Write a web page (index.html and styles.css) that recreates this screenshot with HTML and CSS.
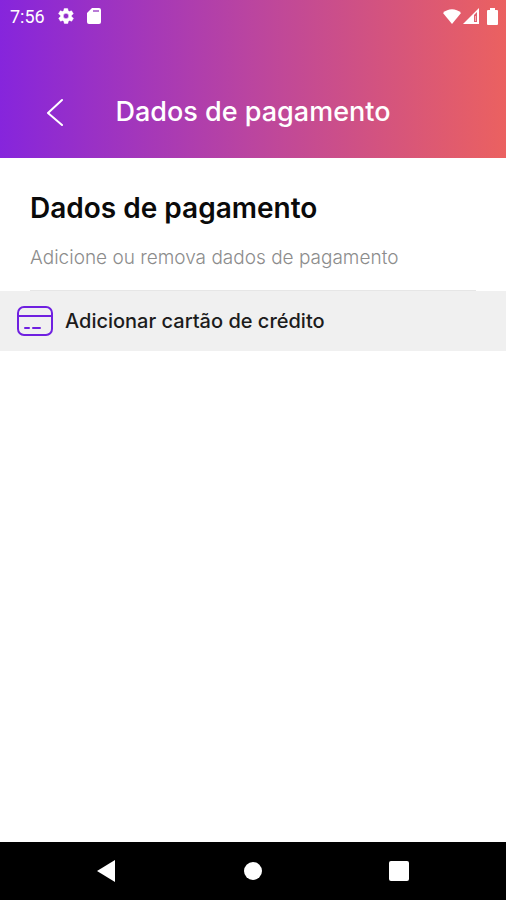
FILE: index.html
```
<!DOCTYPE html>
<html lang="pt-BR">

<head>
    <meta charset="UTF-8">
    <meta name="viewport" content="width=device-width, initial-scale=1.0">
    <title>Dados de pagamento</title>
    <link rel="stylesheet" href="styles.css">
</head>

<body>
    <header class="header">
        <div class="status-bar">
            <span class="clock">7:56</span>
            <div class="status-left">
                <svg width="18" height="18" viewBox="0 0 24 24" fill="#fff" aria-hidden="true">
                    <path d="M19.4 13a7.5 7.5 0 0 0 0-2l2.1-1.6a.5.5 0 0 0 .1-.7l-2-3.4a.5.5 0 0 0-.6-.2l-2.5 1a7.3 7.3 0 0 0-1.7-1l-.4-2.7a.5.5 0 0 0-.5-.4h-4a.5.5 0 0 0-.5.4l-.4 2.7a7.3 7.3 0 0 0-1.7 1l-2.5-1a.5.5 0 0 0-.6.2l-2 3.4a.5.5 0 0 0 .1.7L4.6 11a7.5 7.5 0 0 0 0 2l-2.1 1.6a.5.5 0 0 0-.1.7l2 3.4c.1.2.4.3.6.2l2.5-1a7.3 7.3 0 0 0 1.7 1l.4 2.7c0 .2.2.4.5.4h4c.3 0 .5-.2.5-.4l.4-2.7a7.3 7.3 0 0 0 1.7-1l2.5 1c.2.1.5 0 .6-.2l2-3.4a.5.5 0 0 0-.1-.7zM12 15.6a3.6 3.6 0 1 1 0-7.2 3.6 3.6 0 0 1 0 7.2z" stroke="#fff" stroke-width=".6" />
                </svg>
                <svg width="14" height="16" viewBox="0 0 14 16" aria-hidden="true">
                    <path d="M5 0h7a2 2 0 0 1 2 2v12a2 2 0 0 1-2 2H2a2 2 0 0 1-2-2V5z" fill="#fff" />
                    <path d="M6 3h6" stroke="#b87bd6" stroke-width="2" />
                </svg>
            </div>
            <div class="status-right">
                <svg width="18" height="15" viewBox="0 0 18 15" fill="#fff" aria-hidden="true">
                    <path d="M0 4C5-1 13-1 18 4L9 15z" />
                </svg>
                <svg width="16" height="16" viewBox="0 0 16 16" aria-hidden="true">
                    <path d="M16 0v16H0z" fill="#fff" />
                    <path d="M14 4v10h-3V7z" fill="#e0606f" />
                    <path d="M12.5 8v5" stroke="#f5b8b8" />
                </svg>
                <svg class="battery" width="11" height="17" viewBox="0 0 11 17" fill="#fff" aria-hidden="true">
                    <path d="M3 0h5v2h2a1 1 0 0 1 1 1v13a1 1 0 0 1-1 1H1a1 1 0 0 1-1-1V3a1 1 0 0 1 1-1h2z" />
                </svg>
            </div>
        </div>
        <div class="toolbar">
            <button class="back-button" type="button" aria-label="Voltar">
                <svg width="18" height="28" viewBox="0 0 18 28" fill="none" stroke="#fff" stroke-width="2" stroke-linecap="round" stroke-linejoin="round">
                    <path d="M16 2L2 15l14 12" />
                </svg>
            </button>
            <h1>Dados de pagamento</h1>
        </div>
    </header>

    <main class="content">
        <div class="intro">
            <h2>Dados de pagamento</h2>
            <p>Adicione ou remova dados de pagamento</p>
        </div>
        <button class="add-card" type="button">
            <svg width="36" height="30" viewBox="0 0 36 30" fill="none" stroke="#6f20e0" stroke-width="2" stroke-linecap="round" aria-hidden="true">
                <rect x="1" y="1" width="34" height="28" rx="6" />
                <path d="M1 10h34M8 22h4M16 22h7" />
            </svg>
            <span>Adicionar cartão de crédito</span>
        </button>
    </main>

    <nav class="nav-bar">
        <button type="button" aria-label="Voltar">
            <svg width="20" height="22" viewBox="0 0 20 22" fill="#fff">
                <path d="M18 0v22L0 11z" />
            </svg>
        </button>
        <button type="button" aria-label="Início">
            <svg width="20" height="20" viewBox="0 0 20 20" fill="#fff">
                <circle cx="10" cy="10" r="9" />
            </svg>
        </button>
        <button type="button" aria-label="Recentes">
            <svg width="20" height="20" viewBox="0 0 20 20" fill="#fff">
                <rect width="20" height="20" rx="2" />
            </svg>
        </button>
    </nav>
</body>

</html>
```
FILE: styles.css
```
body {
    display: flex;
    flex-direction: column;
    min-height: 100vh;
    margin: 0;
    background-color: #fff;
    font-family: Inter, sans-serif;
}

button {
    border: none;
    background: none;
    padding: 0;
    font-family: inherit;
    cursor: pointer;
}

svg {
    display: block;
}

h1,
h2,
p {
    margin: 0;
}

.header {
    background: linear-gradient(to right, #8625dc, #bb459f 50%, #eb6160);
    color: #fff;
    padding-bottom: 24px;
}

.status-bar {
    display: flex;
    align-items: center;
    height: 32px;
    padding: 0 8px 0 10px;
}

.clock {
    font-family: Roboto, sans-serif;
    font-size: 18px;
}

.status-left {
    display: flex;
    align-items: center;
    gap: 12px;
    margin-left: 12px;
}

.status-right {
    display: flex;
    align-items: center;
    gap: 2px;
    margin-left: auto;
}

.battery {
    margin-left: 6px;
}

.toolbar {
    display: flex;
    align-items: center;
    height: 44px;
    padding: 0 30px;
    margin-top: 58px;
}

.back-button {
    display: flex;
    align-items: center;
    justify-content: center;
    width: 50px;
    height: 44px;
}

.toolbar h1 {
    flex: 1;
    margin-right: 50px;
    font-size: 27px;
    font-weight: 500;
    line-height: 40px;
    text-align: center;
}

.content {
    flex: 1;
}

.intro {
    margin: 0 30px;
    padding: 30px 0 20px;
    border-bottom: 1px solid #e6e6e6;
}

.intro h2 {
    color: #0a0a0a;
    font-size: 28px;
    font-weight: 600;
    line-height: 40px;
}

.intro p {
    margin-top: 18px;
    color: #8c8c8c;
    font-size: 19px;
    font-weight: 300;
    line-height: 24px;
}

.add-card {
    display: flex;
    align-items: center;
    gap: 12px;
    width: 100%;
    height: 60px;
    padding: 0 17px;
    background-color: #f0f0f0;
    color: #1c1c1c;
    font-size: 20px;
    font-weight: 500;
    text-align: left;
}

.nav-bar {
    display: flex;
    align-items: center;
    justify-content: space-between;
    height: 58px;
    padding: 0 97px;
    background-color: #000;
}
```
